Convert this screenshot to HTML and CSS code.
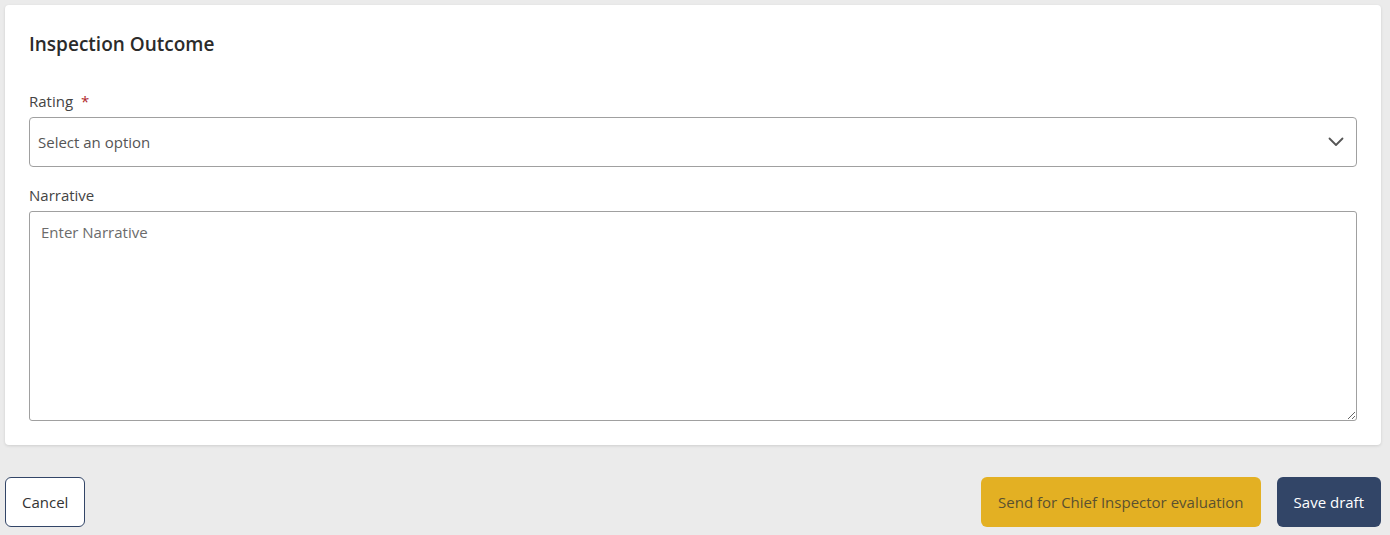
FILE: index.html
```html
<!DOCTYPE html>
<html lang="en">
<head>
<meta charset="utf-8">
<title>Inspection Outcome</title>
<link rel="stylesheet" href="styles.css">
</head>
<body>
<div class="page">
  <section class="card">
    <h2 class="title">Inspection Outcome</h2>
    <div class="field">
      <label class="label">Rating <span class="req">*</span></label>
      <div class="select">
        <span class="select-text">Select an option</span>
        <svg class="chev" width="16" height="10" viewBox="0 0 16 10"><path d="M1.5 1.5 L8 8 L14.5 1.5" fill="none" stroke="#555" stroke-width="1.8" stroke-linecap="round" stroke-linejoin="round"/></svg>
      </div>
    </div>
    <div class="field">
      <label class="label">Narrative</label>
      <textarea class="textarea" placeholder="Enter Narrative"></textarea>
    </div>
  </section>
  <div class="actions">
    <button class="btn btn-cancel">Cancel</button>
    <div class="right">
      <button class="btn btn-yellow">Send for Chief Inspector evaluation</button>
      <button class="btn btn-navy">Save draft</button>
    </div>
  </div>
</div>
</body>
</html>
```
FILE: styles.css
```css
* { box-sizing: border-box; }
html, body { margin: 0; padding: 0; }
body {
  background: #ebebeb;
  font-family: "Open Sans", "Noto Sans", sans-serif;
  color: #333;
}
.page { padding: 5px 9px 0 5px; }
.card {
  background: #fff;
  border-radius: 4px;
  box-shadow: 0 1px 3px rgba(0,0,0,0.12);
  padding: 24px;
}
.title {
  margin: 0 0 32px 0;
  font-size: 19px;
  font-weight: 600;
  line-height: 30px;
  color: #2b2b2b;
}
.field { display: flex; flex-direction: column; }
.field + .field { margin-top: 18px; }
.label {
  font-size: 15px;
  line-height: 20px;
  color: #444;
  margin-bottom: 6px;
}
.req { color: #b0262b; margin-left: 4px; }
.select {
  height: 50px;
  border: 1px solid #a0a0a0;
  border-radius: 4px;
  display: flex;
  align-items: center;
  justify-content: space-between;
  padding: 0 12px 0 8px;
}
.select-text { font-size: 15px; color: #555; }
.textarea {
  height: 210px;
  border: 1px solid #a0a0a0;
  border-radius: 3px;
  padding: 10px 11px;
  font-family: inherit;
  font-size: 15px;
  resize: vertical;
  display: block;
  width: 100%;
}
.textarea::placeholder { color: #6b6b6b; }
.actions {
  margin-top: 32px;
  display: flex;
  justify-content: space-between;
}
.right { display: flex; gap: 16px; }
.btn {
  height: 50px;
  border-radius: 6px;
  font-family: inherit;
  font-size: 15px;
  padding: 0 16px;
  border: 1px solid transparent;
  cursor: pointer;
}
.btn-cancel { background: #fff; border-color: #324567; color: #333; }
.btn-yellow { background: #e3b023; color: #5a5030; }
.btn-navy { background: #324567; color: #fff; }
```
